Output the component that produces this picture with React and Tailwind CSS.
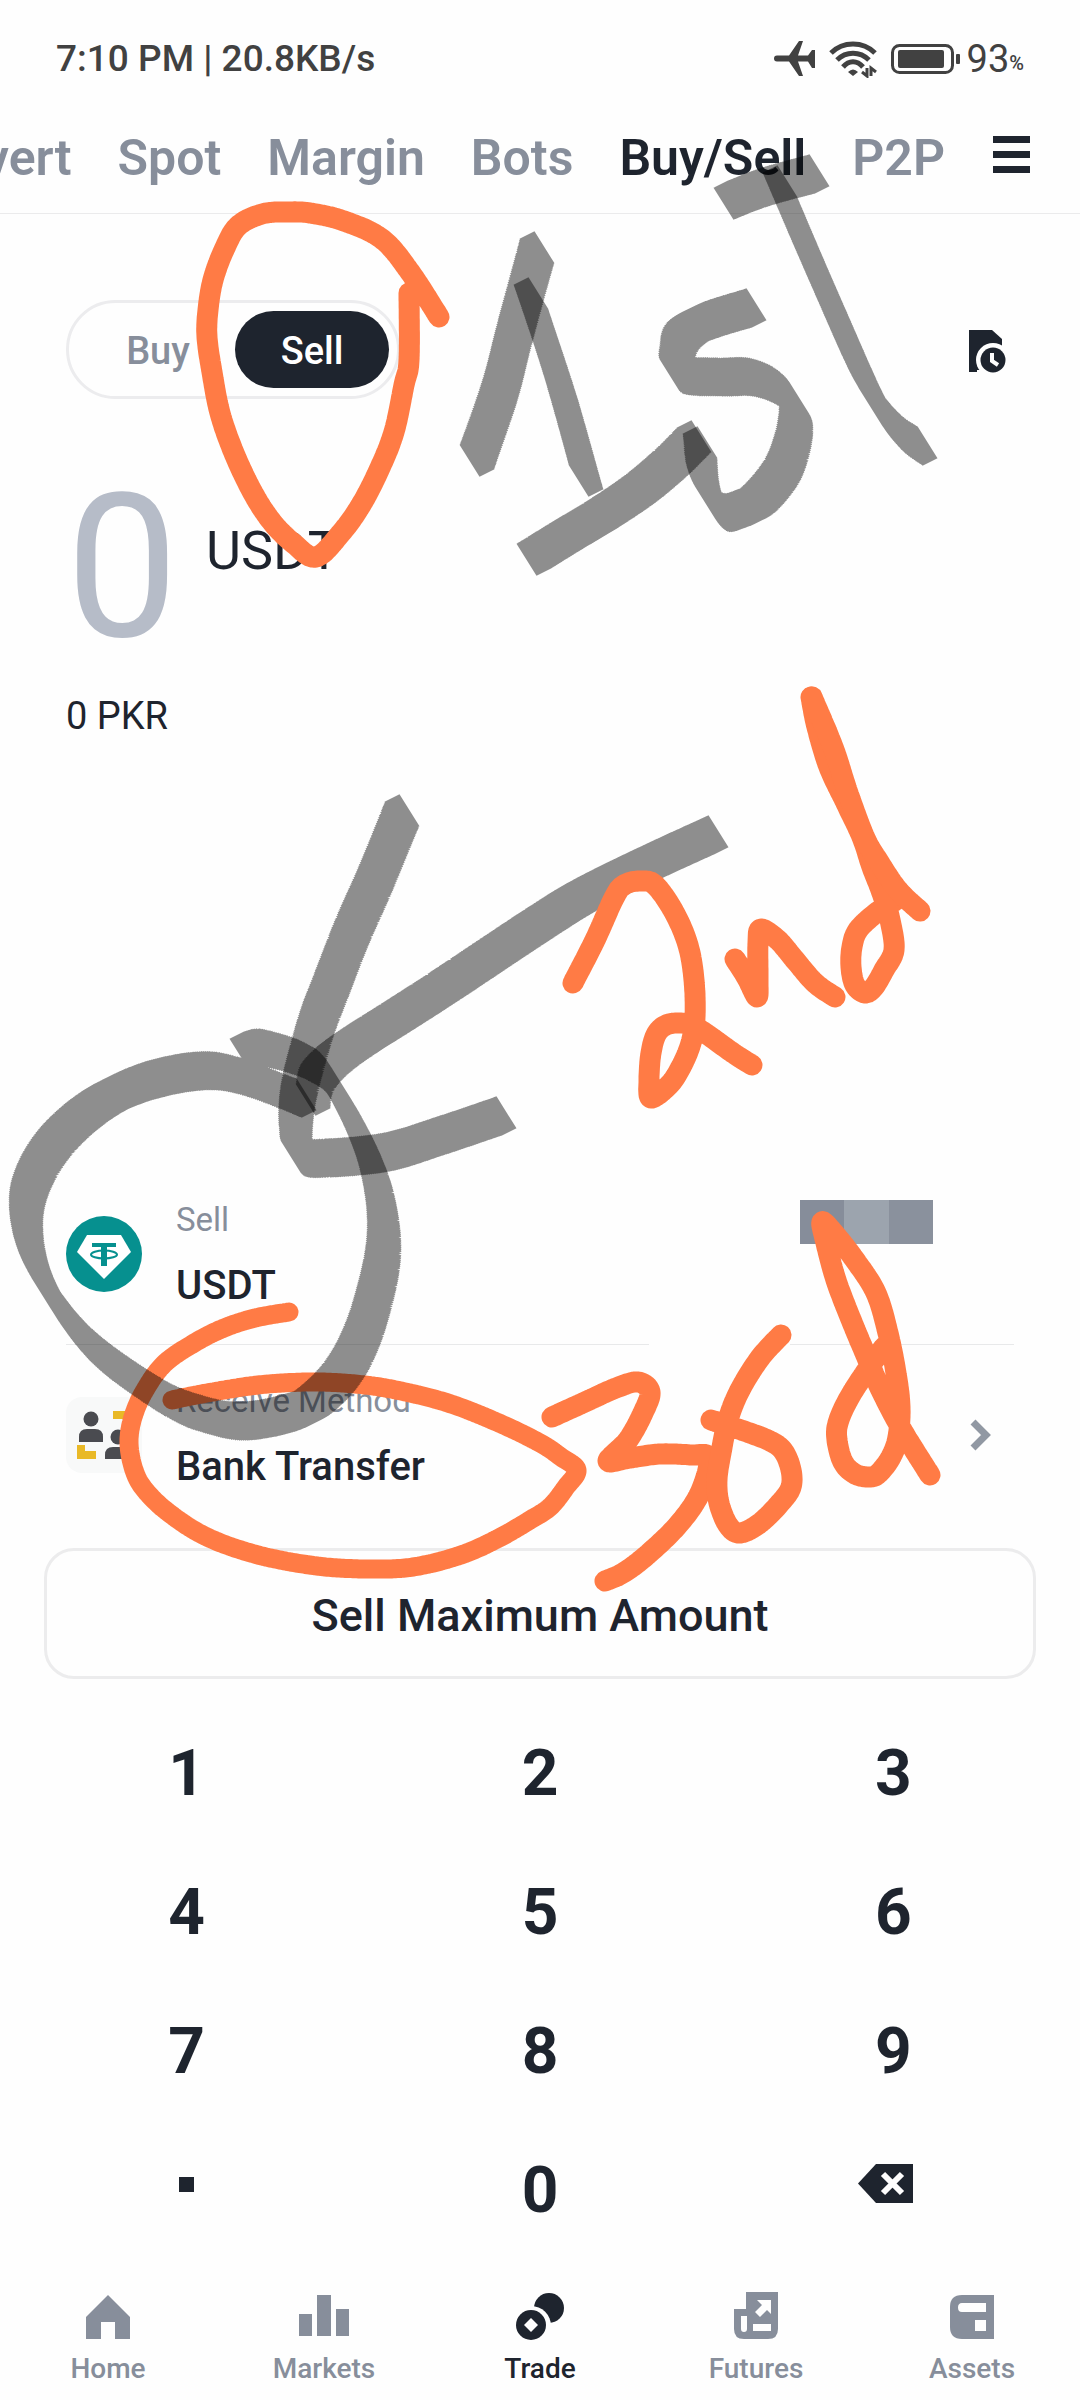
const tabs = ['Convert', 'Spot', 'Margin', 'Bots', 'Buy/Sell', 'P2P'];
const keys = ['1', '2', '3', '4', '5', '6', '7', '8', '9'];

const orangeStrokes = [
  [[409, 293], [409, 360], [404, 385], [394, 432], [379, 470], [361, 505], [341, 533], [316, 557], [293, 543], [272, 522], [253, 493], [234, 453], [220, 413], [212, 372], [207, 337], [208, 310], [213, 280], [224, 250], [238, 226], [262, 214], [286, 212], [310, 213], [344, 221], [382, 239], [410, 272], [439, 317]],
  [[573, 983], [595, 940], [614, 898], [624, 885], [640, 881], [655, 885], [674, 912], [688, 945], [694, 980], [695, 1017], [691, 1043], [681, 1067], [669, 1085], [651, 1098], [649, 1080], [651, 1053], [657, 1033], [669, 1024], [688, 1024], [705, 1033], [733, 1053], [752, 1065]],
  [[735, 959], [747, 978], [757, 997], [758, 980], [758, 943], [761, 929], [778, 940], [795, 960], [815, 983], [835, 997]],
  [[811, 697], [817, 727], [829, 767], [846, 803], [862, 837], [872, 867], [882, 893], [890, 920], [894, 950], [884, 970], [874, 987], [865, 993], [855, 985], [851, 967], [852, 947], [858, 930], [876, 913], [896, 900]],
  [[812, 697], [833, 747], [848, 793], [865, 838], [879, 862], [898, 890], [920, 911]],
  [[552, 1417], [585, 1402], [616, 1388], [638, 1382], [650, 1392], [643, 1413], [628, 1440], [608, 1461], [630, 1458], [660, 1454], [691, 1455], [709, 1458], [700, 1493], [678, 1525], [647, 1555], [623, 1573], [605, 1581]],
  [[781, 1335], [760, 1358], [740, 1390], [728, 1420], [721, 1453], [717, 1480], [719, 1503], [728, 1525], [740, 1533], [760, 1523], [781, 1502], [791, 1487], [791, 1470], [784, 1452], [772, 1442], [747, 1432], [711, 1420]],
  [[884, 1347], [865, 1373], [848, 1400], [838, 1423], [837, 1440], [843, 1462], [855, 1474], [870, 1477], [879, 1473], [891, 1457], [898, 1437], [900, 1407], [896, 1373], [888, 1333], [876, 1293], [855, 1260], [833, 1232], [822, 1222], [826, 1243], [836, 1280], [850, 1317], [865, 1353], [881, 1390], [902, 1430], [930, 1475]],
];

const bankLoop = [[289, 1312], [255, 1318], [224, 1328], [196, 1342], [165, 1363], [145, 1390], [133, 1417], [129, 1443], [134, 1470], [145, 1490], [169, 1513], [207, 1537], [258, 1555], [317, 1566], [368, 1569], [413, 1567], [461, 1555], [499, 1538], [530, 1520], [550, 1507], [566, 1487], [577, 1470], [561, 1457], [540, 1443], [499, 1423], [448, 1403], [396, 1390], [355, 1384], [310, 1382], [258, 1385], [207, 1393], [172, 1400]];

const markerStrokes = [
  [[537, 251], [515, 332], [500, 390], [477, 457]],
  [[531, 297], [560, 385], [586, 477]],
  [[534, 556], [568, 535], [603, 514], [640, 489], [672, 462], [694, 440]],
  [[749, 308], [705, 322], [683, 336], [677, 355], [680, 374], [720, 377], [750, 377], [775, 386], [792, 402], [796, 420], [791, 448], [780, 474], [758, 500], [740, 509], [725, 512], [712, 498], [703, 475], [700, 446]],
  [[731, 200], [765, 187], [812, 174]],
  [[780, 185], [806, 246], [833, 308], [859, 367], [872, 393], [886, 415], [903, 434], [920, 446]],
  [[711, 835], [650, 863], [589, 893], [540, 923], [445, 986], [400, 1015], [359, 1041], [333, 1060], [317, 1078], [313, 1096]],
  [[402, 814], [375, 880], [352, 932], [331, 986], [318, 1020], [309, 1050], [300, 1085], [296, 1112], [296, 1138], [301, 1156], [328, 1158], [387, 1152], [440, 1136], [499, 1116]],
  [[247, 1051], [262, 1048], [290, 1055], [309, 1063], [327, 1077], [353, 1121], [371, 1162], [380, 1196], [384, 1230], [382, 1262], [374, 1298], [363, 1333], [348, 1364], [327, 1390], [298, 1410], [245, 1421], [203, 1414], [163, 1397], [100, 1353], [62, 1310], [35, 1262], [26, 1216], [33, 1179], [57, 1140], [97, 1105], [145, 1082], [200, 1071], [240, 1076], [299, 1098]],
];

// Catmull-Rom through the recorded points, about one sample every 2px
function samplePoints(points) {
  const out = [];
  for (let i = 0; i < points.length - 1; i++) {
    const p0 = points[i - 1] || points[i];
    const p1 = points[i];
    const p2 = points[i + 1];
    const p3 = points[i + 2] || p2;
    const steps = Math.ceil(Math.hypot(p2[0] - p1[0], p2[1] - p1[1]) / 2);
    for (let s = 0; s < steps; s++) {
      const t = s / steps;
      out.push([0, 1].map((k) =>
        0.5 * (2 * p1[k] + (p2[k] - p0[k]) * t + (2 * p0[k] - 5 * p1[k] + 4 * p2[k] - p3[k]) * t * t + (3 * p1[k] - p0[k] - 3 * p2[k] + p3[k]) * t * t * t)
      ));
    }
  }
  out.push(points[points.length - 1]);
  return out;
}

const penPath = (points) => 'M' + samplePoints(points).map(([x, y]) => `${x.toFixed(1)} ${y.toFixed(1)}`).join('L');

// flat marker tip, stamped along the stroke
const markerPath = (points) =>
  samplePoints(points).map(([x, y]) => `M${(x - 17.5).toFixed(1)} ${(y - 12.3).toFixed(1)}l15 -7.4l20 32l-15 7.4z`).join('');

function Doodles() {
  return (
    <svg className="pointer-events-none absolute left-0 top-0 w-full" viewBox="0 0 1080 2400" fill="none" aria-hidden="true">
      <g stroke="#ff7b45" strokeWidth="19" strokeLinecap="round" strokeLinejoin="round">
        <path d={penPath(bankLoop)} />
      </g>
      <g fill="#000" fillOpacity="0.44">
        {markerStrokes.map((points, i) => (
          <path key={i} d={markerPath(points)} />
        ))}
      </g>
      <g stroke="#ff7b45" strokeWidth="21" strokeLinecap="round" strokeLinejoin="round">
        {orangeStrokes.map((points, i) => (
          <path key={i} d={penPath(points)} />
        ))}
      </g>
    </svg>
  );
}

function StatusBar() {
  return (
    <div className="flex items-center justify-between px-14 pt-10 text-[37px] leading-[38px] font-medium text-[#414141]">
      <span>7:10 PM | 20.8KB/s</span>
      <div className="flex items-center">
        <svg width="41" height="38" viewBox="0 0 41 38" fill="#414141">
          <path d="M3 15.500H15L25 1H29L24 15.500H34L38 10H41V28H38L34 21.500H24L29 36H25L15 21.500H3A3 3 0 0 1 3 15.500Z" />
        </svg>
        <svg className="ml-3.5" width="48" height="38" viewBox="0 0 48 38" fill="none" stroke="#414141" strokeWidth="5">
          <path d="M2 13C14 1 34 1 46 13" />
          <path d="M8 20C17 11 31 11 40 20" />
          <path d="M14 27C20 20 28 20 34 27" />
          <path d="M19 32Q24 27 29 32L24 36Z" fill="#414141" stroke="none" />
          <path d="M38 28V36L33 32M42 36V28L47 32" strokeWidth="3" />
        </svg>
        <svg className="ml-3.5" width="70" height="32" viewBox="0 0 70 32">
          <rect x="1.5" y="2.5" width="60" height="27" rx="7" fill="none" stroke="#414141" strokeWidth="3" />
          <rect x="7" y="7" width="46" height="18" rx="2" fill="#414141" />
          <rect x="65" y="11" width="4" height="10" rx="1" fill="#414141" />
        </svg>
        <span className="ml-1.5 text-[38px] font-normal">93</span>
        <span className="self-end text-[20px] leading-[30px]">%</span>
      </div>
    </div>
  );
}

function TopTabs() {
  return (
    <div className="flex items-center border-b border-[#ebebec] pb-[25px] pr-[50px] pt-[50px]">
      <nav className="flex min-w-0 flex-1 justify-end gap-[46px] overflow-hidden text-[50px] leading-[60px] font-semibold">
        {tabs.map((tab) => (
          <a key={tab} href="#" className={tab === 'Buy/Sell' ? 'text-[#1e242e]' : 'text-[#878e9b]'}>
            {tab}
          </a>
        ))}
      </nav>
      <button aria-label="Menu" className="ml-12 flex w-[37px] flex-col gap-2 pb-2">
        <span className="h-[7px] w-full bg-[#1e242e]" />
        <span className="h-[7px] w-full bg-[#1e242e]" />
        <span className="h-[7px] w-full bg-[#1e242e]" />
      </button>
    </div>
  );
}

function UsdtIcon() {
  return (
    <svg className="shrink-0" width="76" height="76" viewBox="0 0 76 76">
      <circle cx="38" cy="38" r="38" fill="#06908f" />
      <path d="M21 19H55L65 36L38 63L11 36Z" fill="#fff" />
      <path d="M26 27H50V31H41V50H35V31H26Z" fill="#06908f" />
      <ellipse cx="38" cy="38.500" rx="13" ry="4" fill="none" stroke="#06908f" strokeWidth="2" />
    </svg>
  );
}

function BankIcon() {
  return (
    <svg className="shrink-0" width="76" height="76" viewBox="0 0 76 76">
      <rect width="76" height="76" rx="16" fill="#f8f9f9" />
      <g fill="#4a4b50">
        <circle cx="25" cy="22" r="7.500" />
        <path d="M13 45V40Q13 32 21 32H29Q37 32 37 40V45Z" />
        <circle cx="52" cy="40" r="7.500" />
        <path d="M39 62V58Q39 50 47 50H57Q65 50 65 58V62Z" />
      </g>
      <path d="M11 48H19V54H30V62H11ZM47 14H65V29H57V22H47Z" fill="#e9b927" />
    </svg>
  );
}

const navItems = [
  {
    label: 'Home',
    icon: <path d="M27 5L49 27V49H34V32H20V49H5V27Z" />,
  },
  {
    label: 'Markets',
    icon: <path d="M2 24H15V46H2ZM20 5H34V46H20ZM39 19H52V46H39Z" />,
  },
  {
    label: 'Trade',
    active: true,
    icon: (
      <>
        <circle cx="36" cy="18" r="15" />
        <circle cx="18" cy="36" r="20" fill="#fefefe" />
        <circle cx="18" cy="35" r="15" />
        <path d="M18 28L25 35L18 42L11 35Z" fill="#fefefe" />
      </>
    ),
  },
  {
    label: 'Futures',
    icon: (
      <>
        <path d="M17 2H49V39Q49 49 39 49H15Q5 49 5 39V19H17Z" />
        <path d="M12 26H18V39Q18 42 15 42Q12 42 12 39ZM24 34H42V41H24ZM28 10H42V24L38 20L31 27L26 22L33 15Z" fill="#fefefe" />
      </>
    ),
  },
  {
    label: 'Assets',
    icon: (
      <>
        <path d="M17 5H49V49H17Q5 49 5 37V17Q5 5 17 5Z" />
        <path d="M17 13H41V22H17Q13 22 13 17.500Q13 13 17 13ZM30 30H41V41H30Z" fill="#fefefe" />
      </>
    ),
  },
];

export default function App() {
  return (
    <div className="relative flex min-h-screen flex-col overflow-hidden bg-[#fefefe] font-[Roboto,sans-serif] text-[#1e242e]">
      <StatusBar />
      <TopTabs />

      <main className="flex flex-1 flex-col">
        <div className="flex items-center justify-between pl-[66px] pr-[73px] pt-[86px]">
          <div className="flex gap-1 rounded-full border-3 border-[#ececee] p-2 text-[38px] font-medium">
            <button className="h-[77px] w-[154px] rounded-full pl-2 pt-1 text-[#878e9b]">Buy</button>
            <button className="h-[77px] w-[154px] rounded-full bg-[#1e242e] pt-1 text-white">Sell</button>
          </div>
          <button aria-label="Order history" className="pt-1">
            <svg width="38" height="43" viewBox="0 0 38 43" fill="#1e242e">
              <path d="M0 0H23L33 9V42H0Z" />
              <circle cx="24" cy="30" r="17" fill="#fefefe" />
              <path d="M33 14L38 14V43H8V40H38Z" fill="#fefefe" />
              <circle cx="24" cy="30" r="12.500" />
              <path d="M23 23V31L29 35" fill="none" stroke="#fefefe" strokeWidth="4" />
            </svg>
          </button>
        </div>

        <div className="mt-[68px] flex items-center gap-6 px-[66px]">
          <input
            aria-label="Amount"
            placeholder="0"
            inputMode="none"
            className="h-[200px] w-[116px] text-[200px] leading-[200px] outline-none placeholder:text-[#b6bcc8]"
          />
          <span className="pb-8 text-[54px] leading-[60px]">USDT</span>
        </div>
        <p className="mt-[25px] px-[66px] text-[38px] leading-[48px]">0 PKR</p>

        <div className="flex-1" />

        <div className="px-[66px]">
          <button className="flex w-full items-center py-[34px] text-left">
            <UsdtIcon />
            <span className="ml-[34px] flex flex-1 flex-col gap-5">
              <span className="text-[33px] leading-[44px] text-[#878e9b]">Sell</span>
              <span className="text-[40px] leading-[48px] font-medium">USDT</span>
            </span>
            <span className="mb-16 mr-[81px] flex">
              <span className="h-11 w-11 bg-[#868d9a]" />
              <span className="h-11 w-[45px] bg-[#9ca4ae]" />
              <span className="h-11 w-11 bg-[#8a919d]" />
            </span>
          </button>
          <div className="flex justify-between">
            <span className="h-px w-[583px] bg-[#e8e9ea]" />
            <span className="h-px w-[224px] bg-[#e8e9ea]" />
          </div>
          <button className="flex w-full items-center py-[34px] text-left">
            <BankIcon />
            <span className="ml-[34px] flex flex-1 flex-col gap-5">
              <span className="text-[33px] leading-[44px] text-[#878e9b]">Receive Method</span>
              <span className="text-[40px] leading-[48px] font-medium">Bank Transfer</span>
            </span>
            <svg className="mr-[22px]" width="22" height="32" viewBox="0 0 22 32" fill="none" stroke="#9198a3" strokeWidth="7">
              <path d="M3 3L16 16L3 29" />
            </svg>
          </button>
        </div>

        <button className="mx-11 mt-[23px] h-[131px] rounded-[30px] border-3 border-[#ececed] pt-1 text-[45px] font-medium">
          Sell Maximum Amount
        </button>

        <div className="mt-[23px] grid grid-cols-3 px-2.5 text-[64px] font-bold">
          {keys.map((key) => (
            <button key={key} className="h-[139px] pt-1">{key}</button>
          ))}
          <button aria-label="Decimal point" className="flex h-[139px] items-center justify-center pb-2">
            <span className="h-[15px] w-[15px] bg-[#1e242e]" />
          </button>
          <button className="h-[139px] pt-1">0</button>
          <button aria-label="Delete" className="flex h-[139px] items-center justify-center pb-2.5 pr-4">
            <svg width="55" height="39" viewBox="0 0 55 39">
              <path d="M0 19.500L18 0H55V39H18Z" fill="#1e242e" />
              <path d="M25 10L44 29M44 10L25 29" stroke="#fefefe" strokeWidth="6" />
            </svg>
          </button>
        </div>
      </main>

      <nav className="grid grid-cols-5 pb-3.5 pt-8">
        {navItems.map((item) => (
          <a
            key={item.label}
            href="#"
            className={`flex flex-col items-center gap-2 text-[28px] leading-[34px] font-medium ${item.active ? 'text-[#1e242e]' : 'text-[#878e9b]'}`}
          >
            <svg width="54" height="54" viewBox="0 0 54 54" fill="currentColor">{item.icon}</svg>
            {item.label}
          </a>
        ))}
      </nav>

      <Doodles />
    </div>
  );
}
